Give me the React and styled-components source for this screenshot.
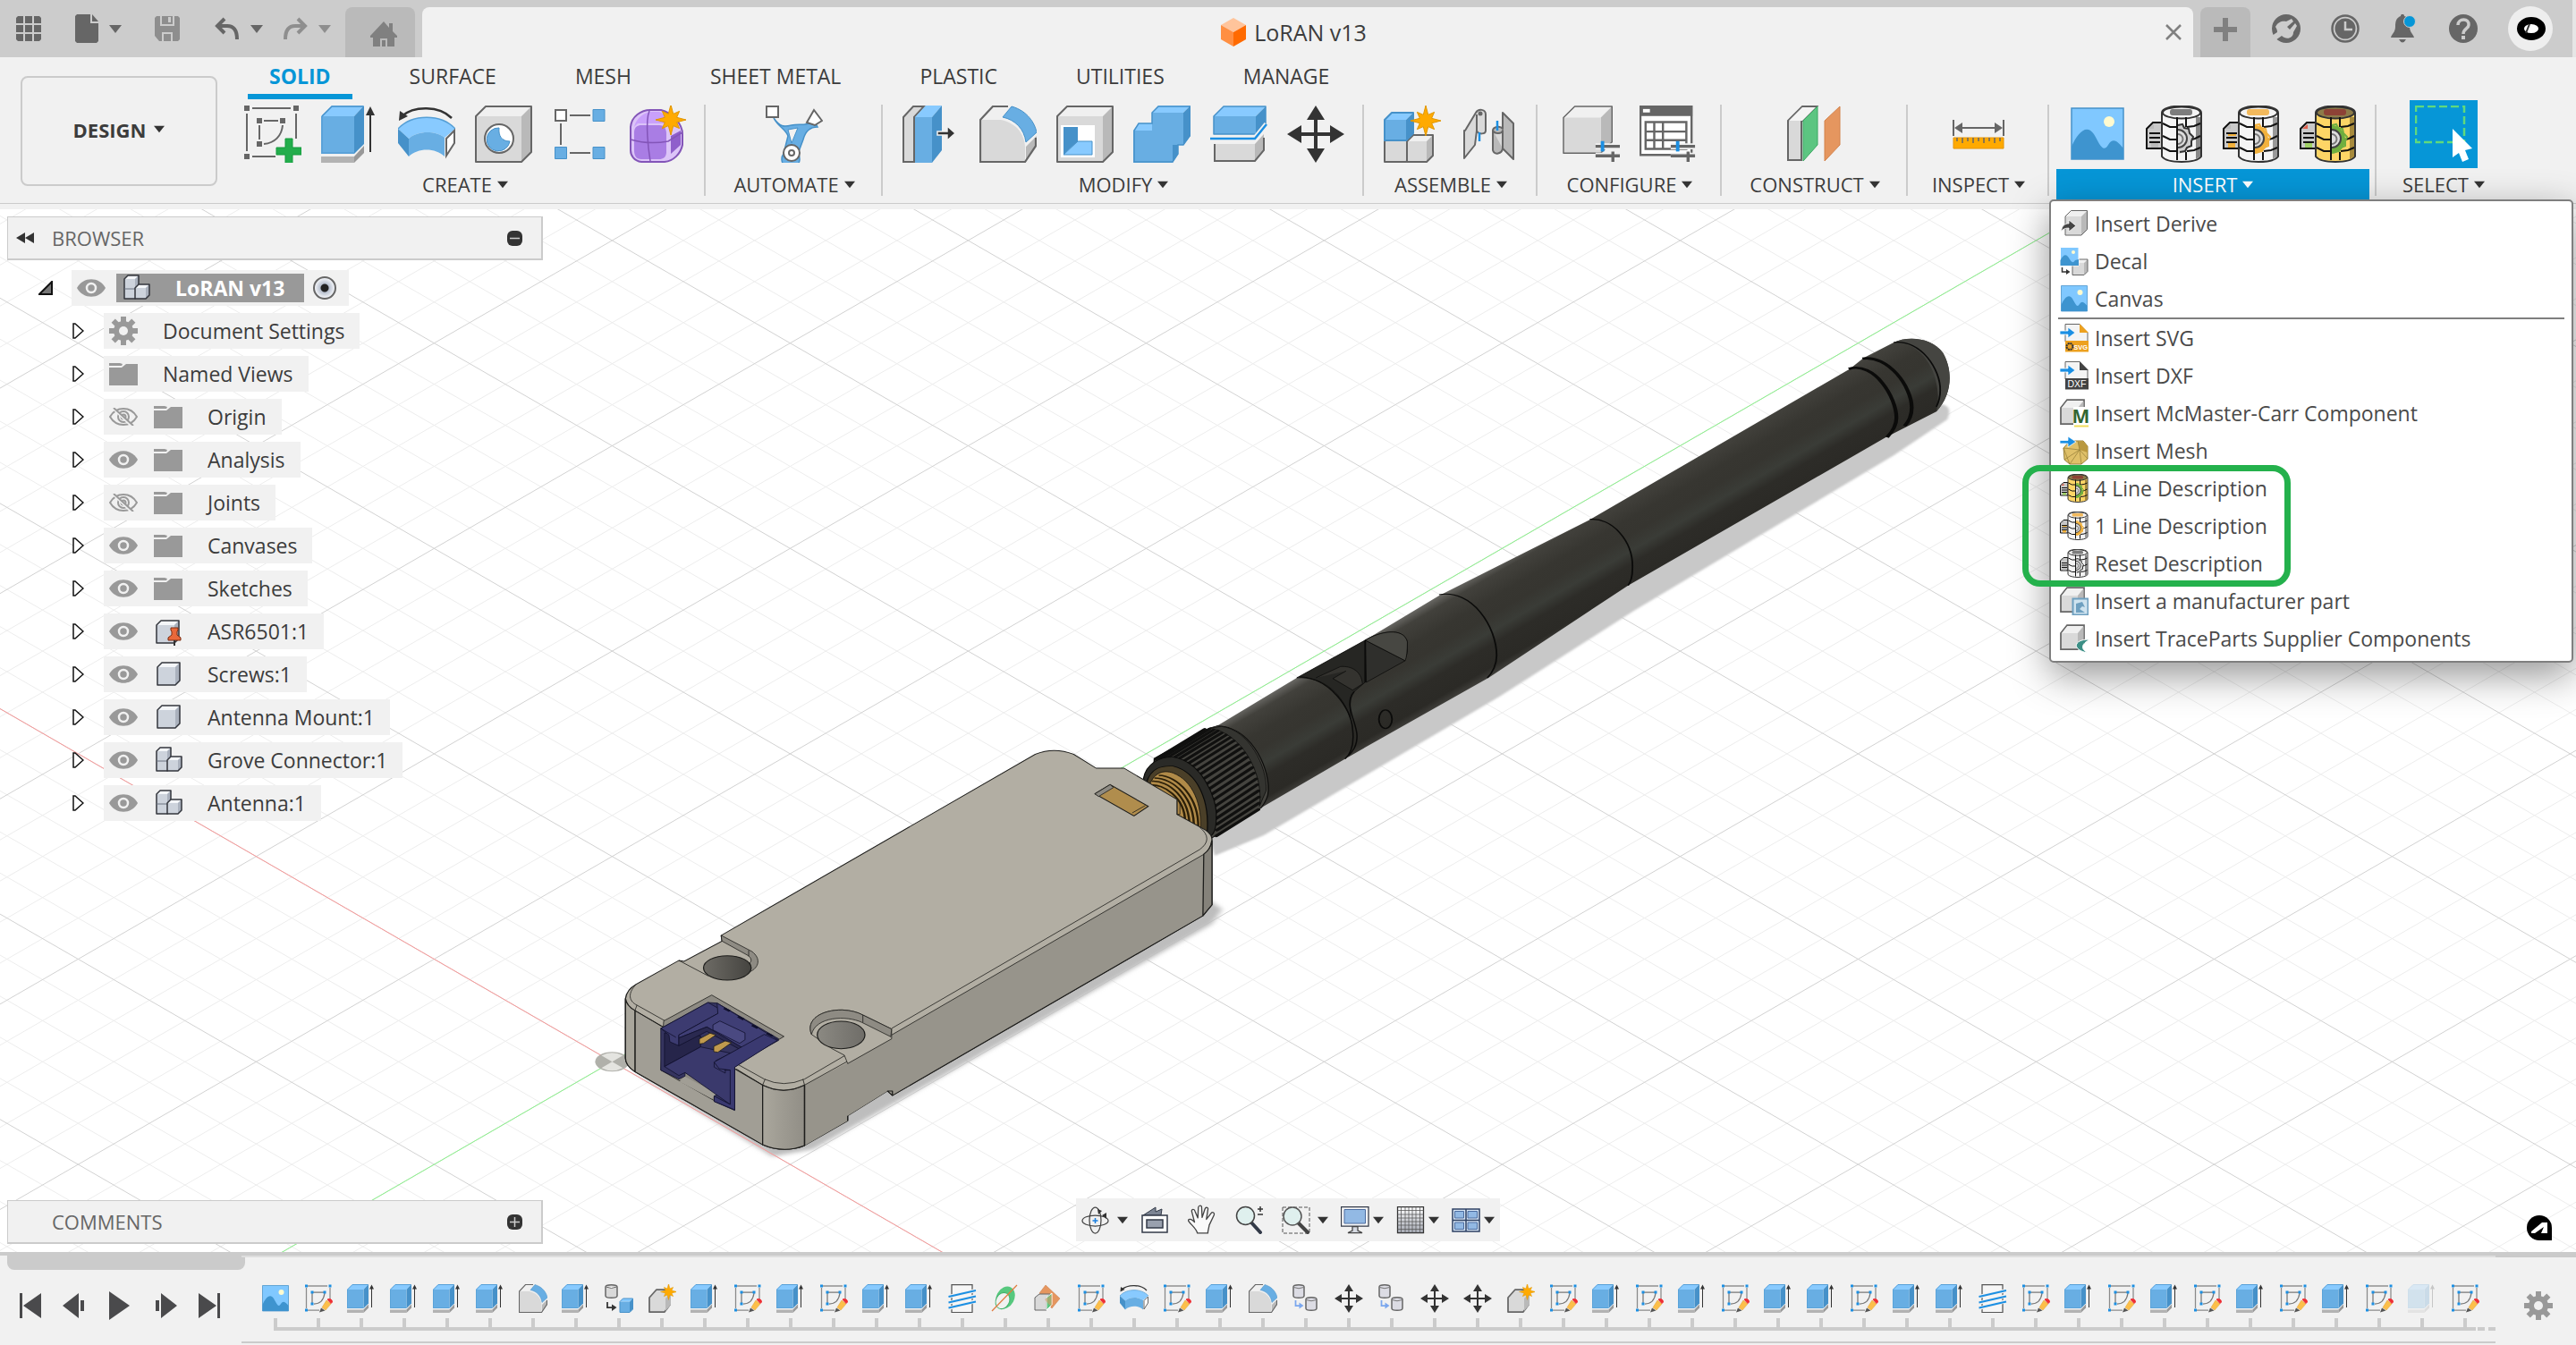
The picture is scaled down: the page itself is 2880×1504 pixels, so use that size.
import React from 'react';
import styled, { createGlobalStyle, css } from 'styled-components';

const color = {
  chrome: '#cccccc',
  chromeDark: '#bababa',
  panel: '#f1f1f1',
  line: '#cbcbcb',
  text: '#3c3c3c',
  muted: '#666666',
  accent: '#0696d7',
  blue: '#68aee3',
  blueLight: '#88caff',
  blueDark: '#4691c9',
  grey: '#d9d9d9',
  greyLight: '#f0f0f0',
  greyDark: '#b9b9b9',
  edge: '#666666',
};

const GlobalStyle = createGlobalStyle`
  *, *::before, *::after { box-sizing: border-box; }
  body {
    margin: 0;
    background: ${color.panel};
    color: ${color.text};
    font-family: 'Open Sans', 'Noto Sans', sans-serif;
    font-size: 22px;
    line-height: 30px;
  }
  button {
    margin: 0;
    padding: 0;
    border: 0;
    background: none;
    color: inherit;
    font: inherit;
    cursor: pointer;
  }
  svg { display: block; flex: none; }
`;

/* ---------- icon drawing helpers ---------- */

const Svg = ({ size = 64, h, box = '0 0 64 64', children, ...rest }) => (
  <svg width={size} height={h || size} viewBox={box} fill="none" aria-hidden="true" {...rest}>
    {children}
  </svg>
);

const Caret = ({ fill = '#333', w = 14, h = 9 }) => (
  <svg width={w} height={h} viewBox="0 0 14 9" aria-hidden="true">
    <path d="M0 0H14L7 9Z" fill={fill} />
  </svg>
);

const Star = ({ cx, cy, r, inner = 0.5 }) => {
  const pts = Array.from({ length: 16 }, (_, i) => {
    const a = (i * Math.PI) / 8 - Math.PI / 2;
    const k = i % 2 ? r * inner : i % 4 ? r * 0.8 : r;
    return `${(cx + k * Math.cos(a)).toFixed(1)},${(cy + k * Math.sin(a)).toFixed(1)}`;
  });
  return <polygon points={pts.join(' ')} fill="#ffaa00" stroke="#e09600" />;
};

const Box = ({ x, y, w, h, d = 11, blue, sw = 2 }) => {
  const [f, t, s, e] = blue
    ? [color.blue, color.blueLight, color.blueDark, color.blueDark]
    : [color.grey, color.greyLight, color.greyDark, color.edge];
  return (
    <g strokeLinejoin="round">
      <path d={`M${x} ${y + d}l${d} ${-d}h${w}l${-d} ${d}Z`} fill={t} />
      <path d={`M${x + w} ${y + d}l${d} ${-d}v${h}l${-d} ${d}Z`} fill={s} />
      <path d={`M${x} ${y + d}h${w}v${h}h${-w}Z`} fill={f} />
      <path
        d={`M${x} ${y + d}l${d} ${-d}h${w}v${h}l${-d} ${d}h${-w}Z`}
        stroke={e}
        strokeWidth={sw}
      />
    </g>
  );
};

const IconSketch = () => (
  <Svg>
    <g fill={color.edge}>
      <path d="M0 0h6v6H0zM55 0h6v6h-6zM0 54h6v6H0zM14 14h6v6h-6zM40 14h6v6h-6zM14 40h6v6h-6z" />
    </g>
    <path d="M9 3h43M3 9v42M58 9v28M9 57h26M22 17h16M17 22v16M43 22C42 34 34 42 22 43" stroke={color.edge} strokeWidth="2" />
    <path d="M46 37h8v10h10v8H54v10h-8V55H36v-8h10z" fill="#23ad4c" stroke="#159a3c" />
  </Svg>
);

const IconExtrude = ({ size, ...p }) => (
  <Svg size={size} {...p}>
    <path d="M0 12L12 0H48L37 12Z" fill={color.blueLight} />
    <path d="M37 12L48 0V43L37 54Z" fill={color.blueDark} />
    <path d="M0 12H37V54H0Z" fill={color.blue} />
    <path d="M1 12L12 1H47" stroke={color.blueDark} strokeWidth="1.5" />
    <path d="M1 12V53H37" stroke="#559fd6" strokeWidth="1.5" />
    <path d="M0 57H37V64H0Z" fill="#b3b3b3" />
    <path d="M37 57L48 45V53L37 64Z" fill="#999" />
    <path d="M55 8V52" stroke="#333" strokeWidth="2" />
    <path d="M55 1L60 11H50Z" fill="#333" />
  </Svg>
);

const IconRevolve = ({ size }) => (
  <Svg size={size}>
    <path d="M0 26C16 9 48 9 64 26L52 36C42 28 22 28 12 37Z" fill={color.blueLight} />
    <path d="M12 37C22 28 42 28 52 36V57C42 47 22 47 12 57Z" fill={color.blue} />
    <path d="M0 26L12 37V57L0 42Z" fill={color.blueDark} />
    <path d="M0 26C16 9 48 9 64 26" stroke="#559fd6" strokeWidth="1.5" />
    <path d="M54 37L63 28V42L54 56Z" fill="#fff" stroke={color.edge} strokeWidth="2" />
    <path d="M4 12C18 0 46 0 60 14" stroke="#333" strokeWidth="2.5" />
    <path d="M1 17L2 6L11 12Z" fill="#333" />
  </Svg>
);

const IconHole = () => (
  <Svg>
    <Box x={1} y={1} w={51} h={51} />
    <circle cx="27" cy="37" r="16" fill="#fff" stroke={color.edge} strokeWidth="2" />
    <path d="M27 25a13 13 0 1 0 12 15C30 40 26 34 27 25Z" fill={color.blue} stroke={color.blueDark} />
  </Svg>
);

const IconPattern = () => (
  <Svg>
    <rect x="4" y="5" width="12" height="12" fill="#fff" stroke={color.edge} strokeWidth="2" />
    <g fill={color.blue} stroke={color.blueDark}>
      <path d="M46 4.500h13v13H46zM3.500 46.500h13v13h-13zM46 46.500h13v13H46z" />
    </g>
    <path d="M20 11h23M10 20v24M20 53h23" stroke={color.edge} strokeWidth="2" />
  </Svg>
);

const IconForm = () => (
  <Svg>
    <path d="M2 24C3 12 14 5 24 5H36C48 8 60 20 60 32V44C58 54 50 62 40 63H14C6 62 2 56 2 50Z" fill="#dcc4f8" stroke="#8355b8" strokeWidth="2" />
    <path d="M6 24C8 14 18 7 26 7H34C40 9 44 16 42 20H10Z" fill="#c9a0fb" />
    <path d="M6 30C6 24 10 22 14 22H34C40 22 42 26 42 32V52C42 58 38 60 34 60H14C8 60 6 56 6 50Z" fill="#a97de4" />
    <path d="M47 34L58 28V44L47 54Z" fill="#8f5fcb" />
    <path d="M2 38Q22 44 44 40L60 30M23 6C18 18 22 50 24 62" stroke="#8355b8" strokeWidth="1.500" />
    <Star cx={47} cy={16} r={17} inner={0.42} />
  </Svg>
);

const IconAutomate = () => (
  <Svg>
    <path d="M9 14C16 24 20 24 29 22C38 20 46 24 54 16L58 24C48 24 44 30 42 38L36 54A10 10 0 1 1 20 54L25 34C22 26 14 24 9 14Z" fill={color.blue} stroke={color.blueDark} strokeWidth="1.500" />
    <path d="M25 27L36 25L29 42Z" fill="#f1f1f1" stroke={color.blueDark} />
    <rect x="1" y="1" width="13" height="12" fill="#fff" stroke={color.edge} strokeWidth="2" />
    <path d="M54 5L63 17L55 22L46 19Z" fill="#fff" stroke={color.edge} strokeWidth="2" />
    <circle cx="29" cy="53" r="9" fill="#fff" stroke={color.edge} strokeWidth="2" />
    <circle cx="29" cy="53" r="3" stroke={color.edge} strokeWidth="2" />
  </Svg>
);

const IconPressPull = () => (
  <Svg>
    <path d="M1 13L12 1H24L13 13V63H1Z" fill={color.grey} stroke={color.edge} strokeWidth="2" />
    <path d="M14 13L26 0H44L33 13Z" fill={color.blueLight} />
    <path d="M33 13L44 0V50L33 64Z" fill={color.blueDark} />
    <path d="M14 13H33V64H14Z" fill={color.blue} />
    <path d="M39 29h11v-6l9 8-9 8v-6H39z" fill="#333" stroke="#f1f1f1" strokeWidth="1.500" />
  </Svg>
);

const IconFillet = ({ size }) => (
  <Svg size={size}>
    <path d="M1 16L15 1H36L26 16Z" fill={color.greyLight} />
    <path d="M1 16H24C42 20 50 32 51 46V63H1Z" fill={color.grey} />
    <path d="M52 46L64 34V46L52 63Z" fill={color.greyDark} />
    <path d="M26 13L36 1C54 6 62 20 64 30L52 41C50 26 40 16 26 13Z" fill={color.blue} stroke={color.blueDark} />
    <path d="M32 1H15L1 16V63H51L63 45V36" stroke={color.edge} strokeWidth="2.200" />
  </Svg>
);

const IconShell = () => (
  <Svg>
    <Box x={1} y={1} w={51} h={51} />
    <path d="M5 22H43V58H5Z" fill="#fff" />
    <path d="M8 24H24V40L8 55Z" fill={color.blueDark} />
    <path d="M8 55L24 40H40V55Z" fill={color.blueLight} stroke={color.blueDark} />
  </Svg>
);

const IconCombine = () => (
  <Svg>
    <path d="M21 8L28 0H64L56 8ZM0 28L6 20H22V28Z" fill={color.blueLight} />
    <path d="M56 8L64 0V34L56 44ZM44 44H50V54L44 64Z" fill={color.blueDark} />
    <path d="M0 28H21V8H56V44H44V64H0Z" fill={color.blue} />
    <path d="M1 28L6 20H21V8L28 1H63V34L56 44H50V54L44 63H1Z" stroke={color.blueDark} strokeWidth="1.500" />
  </Svg>
);

const IconSplit = () => (
  <Svg>
    <Box x={4} y={1} w={47} h={20} blue sw={1.5} />
    <path d="M5 43H50V62H5Z" fill={color.grey} />
    <path d="M50 43L60 32V50L50 62Z" fill={color.greyDark} />
    <path d="M5 43V62H50L60 50V36" stroke={color.edge} strokeWidth="2" />
    <path d="M0 37H50L63 21" stroke="#f1f1f1" strokeWidth="6" />
    <path d="M0 37H50L63 21" stroke="#1b8fe3" strokeWidth="2.500" />
  </Svg>
);

const IconMove = ({ size }) => (
  <Svg size={size}>
    <path d="M32 0L42 16H34V30H48V22L64 32L48 42V34H34V48H42L32 64L22 48H30V34H16V42L0 32L16 22V30H30V16H22Z" fill="#333" />
  </Svg>
);

const IconNewComponent = () => (
  <Svg>
    <Box x={1} y={33} w={24} h={23} d={7} />
    <Box x={26} y={33} w={22} h={23} d={7} />
    <Box x={1} y={8} w={24} h={23} d={8} blue />
    <Star cx={47} cy={17} r={17} inner={0.42} />
  </Svg>
);

const IconJoint = () => (
  <Svg>
    <g stroke={color.edge} strokeWidth="2" strokeLinejoin="round">
      <path d="M5 28L17 8C20 3 28 4 28 10V28C28 32 20 33 18 28L16 44L4 59V28Z" fill={color.grey} />
      <path d="M18 10V28" />
      <path d="M59 20L47 8V26C44 22 36 24 36 28V50C38 56 46 54 47 48L59 60Z" fill={color.greyDark} />
      <path d="M36 28C38 32 46 32 47 28V48" fill={color.grey} />
    </g>
    <circle cx="22" cy="9" r="2.500" fill={color.edge} />
    <path d="M21 30V40M41 17V28" stroke="#1b8fe3" strokeWidth="2.500" />
  </Svg>
);

const Sliders = ({ x }) => (
  <g>
    <path d={`M${x} 47h28M${x} 58h28`} stroke="#f1f1f1" strokeWidth="7" />
    <path d={`M${x} 47h28M${x} 58h28M${x + 20} 53v12`} stroke={color.edge} strokeWidth="3.500" />
    <path d={`M${x + 8} 41v12`} stroke="#1b8fe3" strokeWidth="4" />
  </g>
);

const IconConfigure = () => (
  <Svg box="0 0 66 66">
    <Box x={1} y={1} w={43} h={41} d={13} sw={1.5} />
    <Sliders x={38} />
  </Svg>
);

const IconConfigTable = () => (
  <Svg box="0 0 66 66">
    <path d="M1 1H60V57H1Z" fill="#fff" stroke={color.edge} strokeWidth="2.500" />
    <path d="M0 0H61V12H0Z" fill={color.edge} />
    <path d="M4 4h8v4H4z" fill="#fff" />
    <path d="M7 19H54V50H7ZM7 30H54M7 40H54M17 19V50M27 19V50" stroke={color.edge} strokeWidth="2.500" />
    <Sliders x={36} />
  </Svg>
);

const IconConstruct = () => (
  <Svg>
    <path d="M2 17L18 1H34L17 18V61H2Z" fill={color.grey} stroke={color.edge} strokeWidth="2" />
    <path d="M3 17L18 2H33L18 17Z" fill="#f4f4f4" />
    <path d="M19 17L35 1V44L19 62Z" fill="#5cc581" stroke="#3aa862" />
    <path d="M43 17L60 1V44L43 62Z" fill="#e5965f" stroke="#d3824b" />
  </Svg>
);

const IconMeasure = () => (
  <Svg>
    <path d="M4 16V34M60 16V34M8 25H56" stroke={color.edge} strokeWidth="2" />
    <path d="M5 25L14 19V31ZM59 25L50 19V31Z" fill={color.edge} />
    <path d="M4 36H60V48H4Z" fill="#ffaa00" stroke="#e59400" />
    <path d="M8 36v4M14 36v6M20 36v4M26 36v6M32 36v4M38 36v6M44 36v4M50 36v6M56 36v4" stroke={color.edge} strokeWidth="1.500" />
  </Svg>
);

const IconCanvas = ({ size }) => (
  <Svg size={size}>
    <path d="M3 3H61V60H3Z" fill="#80c8ff" stroke={color.blueDark} strokeWidth="1.500" />
    <circle cx="45" cy="18" r="6" fill="#fffbd0" />
    <path d="M3 46C10 30 20 20 28 32C34 42 38 54 44 44C50 34 56 42 61 48V60H3Z" fill="#3e94cf" />
  </Svg>
);

const barrel = {
  grey: { body: '#f4f4f4', shade: '#888', cap: '#7d7d7d', rim: '#f4f4f4', gear: '#cfcfcf', a: '#bbb', b: '#bbb' },
  amber: { body: '#f4f4f4', shade: '#999', cap: '#f2b95c', rim: '#f4f4f4', gear: '#f2b13c', a: '#bbb', b: '#f2b13c' },
  gold: { body: '#fdd566', shade: '#a78a3c', cap: '#8d4236', rim: '#8d7b49', gear: '#6fae3f', a: '#e0604c', b: '#9fd065' },
};

const IconBarrel = ({ size, variant }) => {
  const c = barrel[variant];
  return (
    <Svg size={size}>
      <path d="M1 26L8 19H18V48H1Z" fill="#c9c9c9" stroke="#111" strokeWidth="2" />
      <path d="M3 26h6v-5z" fill={c.a} />
      <path d="M4 31h12M4 36h12M4 41h12" stroke="#111" strokeWidth="2" />
      <path d="M6 42h8v5H6z" fill={c.b} />
      <path d="M6 32h9v2H6z" fill={variant === 'amber' ? c.b : 'none'} />
      <path d="M18 8C18 -2 62 -2 62 8V57C56 65 24 65 18 57Z" fill={c.body} stroke="#333" strokeWidth="2" />
      <path d="M56 13H61V57L56 60Z" fill={c.shade} />
      <ellipse cx="40" cy="8" rx="21" ry="6.500" fill={c.rim} stroke="#333" strokeWidth="2" />
      <rect x="27" y="4" width="25" height="7" rx="3" fill={c.cap} />
      <path d="M35 22A16 16 0 0 1 35 54Z" fill={c.gear} />
      <path d="M36 27A10 10 0 0 1 36 47" fill="#ddd" stroke="#444" strokeWidth="2" />
      <path d="M36 32A5 5 0 0 1 36 43" stroke="#777" strokeWidth="2" />
      <path
        d="M35 13V61M45 13V24M45 52V61M19 20L27 24H35M19 34L27 38H35M19 47L27 51H35M46 24L54 23L61 20M51 38L55 37L61 34M46 51L54 50L61 47"
        stroke="#111"
        strokeWidth="2"
      />
      <path d="M36 22l5-1 2 4 5 1 1 5 4 4-2 5 0 5-5 2-2 4-6 1" stroke={variant === 'grey' ? '#333' : c.gear} strokeWidth="2" />
    </Svg>
  );
};

const IconSelect = () => (
  <Svg>
    <path d="M1 1H55V41H1Z" stroke="#60d97c" strokeWidth="2.500" strokeDasharray="9 4" />
    <path d="M42 26L64 48L56 50L60 60L53 63L49 53L42 58Z" fill="#fff" />
  </Svg>
);

/* timeline-only icons */

const IconTimelineSketch = ({ size }) => (
  <Svg size={size}>
    <path d="M6 4H52" stroke="#a9a9a9" strokeWidth="4" />
    <path d="M5 8V54M58 8V32M6 58H34" stroke="#8a8a8a" strokeWidth="2.500" />
    <path d="M20 18H44M18 20V42M46 20C44 34 36 44 22 44" stroke="#777" strokeWidth="2.500" />
    <path d="M2 1h6v6H2zM55 1h6v6h-6zM2 55h6v6H2zM15 15h6v6h-6zM43 15h6v6h-6zM15 41h6v6h-6z" fill="#1b8fe3" />
    <path d="M40 52L50 36L60 44L48 58Z" fill="#fcbf4a" stroke="#e0a030" />
    <path d="M52 34Q62 30 63 40L60 43Z" fill="#ee2f35" stroke="#ee2f35" strokeWidth="2" />
    <path d="M34 63L38 53L47 59Z" fill="#555" />
  </Svg>
);

const IconComponentFromBody = ({ size }) => (
  <Svg size={size}>
    <path d="M2 6C2 0 28 0 28 6V26C28 32 2 32 2 26Z" fill={color.grey} stroke={color.edge} strokeWidth="3" />
    <path d="M3 6Q15 12 27 6" fill="#fff" stroke={color.edge} strokeWidth="2" />
    <path d="M6 40V52H20" stroke="#333" strokeWidth="3.500" />
    <path d="M16 45L27 52L16 60Z" fill="#333" />
    <Box x={34} y={32} w={22} h={24} d={7} blue />
  </Svg>
);

const IconStarBody = ({ size }) => (
  <Svg size={size}>
    <path d="M4 30L20 12H50V46L38 62H4Z" fill={color.grey} stroke={color.edge} strokeWidth="3.500" strokeLinejoin="round" />
    <path d="M40 32L52 20V46L40 60Z" fill={color.greyDark} />
    <Star cx={47} cy={17} r={18} inner={0.42} />
  </Svg>
);

const IconThread = ({ size }) => (
  <Svg size={size}>
    <path d="M8 1H54V63H8Z" fill="#f6f6f6" stroke="#555" strokeWidth="2.500" />
    <path d="M0 28L62 14M0 42L62 26M0 54L62 38" stroke="#f1f1f1" strokeWidth="8" />
    <path d="M1 28L62 14M1 41L62 27M1 53L62 39" stroke="#1b8fe3" strokeWidth="4" />
  </Svg>
);

const IconAxis = ({ size }) => (
  <Svg size={size}>
    <ellipse cx="32" cy="30" rx="20" ry="26" fill="#57c87e" transform="rotate(28 32 30)" />
    <ellipse cx="26" cy="37" rx="15" ry="19" fill="#f1f1f1" stroke="#43b36b" strokeWidth="2" transform="rotate(28 26 37)" />
    <path d="M2 60L58 2" stroke="#e07c40" strokeWidth="2.500" />
  </Svg>
);

const IconPlane = ({ size }) => (
  <Svg size={size}>
    <path d="M26 2L58 32L40 54L26 36L12 20Z" fill="#e5965f" stroke="#c97842" />
    <path d="M2 30L12 22H36L28 30V58H2Z" fill={color.grey} stroke={color.edge} strokeWidth="2" />
    <path d="M28 30L40 20V46L28 58Z" fill="#5cc581" stroke="#fff" strokeWidth="2" />
    <path d="M24 34L40 24V50L32 44Z" fill="#e5965f" opacity="0.5" />
  </Svg>
);

const IconCopy = ({ size }) => (
  <Svg size={size}>
    <g fill="#dcdce4" stroke="#666" strokeWidth="3">
      <path d="M4 6C4 0 28 0 28 6V26C28 32 4 32 4 26Z" />
      <path d="M32 34C32 28 56 28 56 34V54C56 60 32 60 32 54Z" />
    </g>
    <path d="M5 7Q16 12 27 7M33 35Q44 40 55 35" stroke="#777" strokeWidth="2" />
    <path d="M9 36V48H18" stroke="#7ba7ee" strokeWidth="3.500" />
    <path d="M17 41L27 48L17 55Z" fill="#7ba7ee" />
  </Svg>
);

const timelineIcons = {
  c: IconCanvas,
  s: IconTimelineSketch,
  e: IconExtrude,
  f: IconFillet,
  b: IconComponentFromBody,
  n: IconStarBody,
  t: IconThread,
  a: IconAxis,
  p: IconPlane,
  r: IconRevolve,
  k: IconCopy,
  m: IconMove,
};
const timelineNames = {
  c: 'Canvas', s: 'Sketch', e: 'Extrude', f: 'Fillet', b: 'Component from body', n: 'New component',
  t: 'Thread', a: 'Axis', p: 'Plane', r: 'Revolve', k: 'Copy', m: 'Move',
};
const timelineSteps = 'cseeeefebneseseetapsrsefkmkmmnseseseeseetsesesesesEs';

/* ---------- top bar ---------- */

const Page = styled.div`
  display: grid;
  grid-template-rows: auto auto 1fr auto;
  min-height: 100vh;
`;

const TopBar = styled.header`
  display: flex;
  align-items: flex-end;
  height: 64px;
  padding-left: 16px;
  background: ${color.chrome};
  border-right: 4px solid #e6e6e6;
`;

const QuickActions = styled.div`
  display: flex;
  align-items: center;
  align-self: stretch;
  width: 370px;
`;

const QuickButton = styled.button`
  display: flex;
  align-items: center;
  gap: 12px;
  margin-right: ${(p) => p.$gap || 0}px;
  opacity: ${(p) => (p.disabled ? 0.6 : 1)};
`;

const HomeTab = styled.button`
  display: flex;
  align-items: center;
  justify-content: center;
  width: 78px;
  height: 56px;
  padding: 4px 0 0 8px;
  margin-right: 8px;
  border-radius: 8px 8px 0 0;
  background: ${color.chromeDark};
`;

const DocumentTab = styled.div`
  display: flex;
  flex: 1;
  align-items: center;
  height: 56px;
  padding-right: 12px;
  border-radius: 8px 8px 0 0;
  background: ${color.panel};
`;

const DocumentTitle = styled.h1`
  display: flex;
  flex: 1;
  align-items: center;
  justify-content: center;
  gap: 8px;
  margin: 0;
  font-size: 25px;
  font-weight: 400;
  line-height: 32px;
`;

const NewTab = styled(HomeTab)`
  width: 56px;
  padding: 0 0 6px;
  margin: 0 0 0 8px;
`;

const AccountActions = styled.div`
  display: flex;
  align-items: center;
  align-self: stretch;
  gap: 34px;
  padding: 0 22px 0 24px;
`;

/* ---------- ribbon ---------- */

const Ribbon = styled.div`
  display: flex;
  height: 170px;
  border-bottom: 6px solid ${color.panel};
  box-shadow: inset 0 -1px 0 ${color.line};
`;

const WorkspaceButton = styled.button`
  display: flex;
  align-items: center;
  justify-content: center;
  gap: 9px;
  width: 220px;
  height: 123px;
  padding-bottom: 4px;
  margin: 21px 8px 0 23px;
  border: 2px solid ${color.line};
  border-radius: 8px;
  font-weight: 700;
`;

const RibbonBody = styled.div`
  flex: 1;
  min-width: 0;
`;

const TabList = styled.div`
  display: flex;
  gap: 40px;
  padding-left: 26px;
`;

const RibbonTab = styled.button`
  height: 47px;
  padding: 0 24px;
  border-bottom: 6px solid transparent;
  font-size: 23px;
  white-space: nowrap;
  ${(p) =>
    p['aria-selected'] &&
    css`
      color: ${color.accent};
      border-color: ${color.accent};
      font-weight: 700;
    `}
`;

const Groups = styled.div`
  display: flex;
`;

const Group = styled.section`
  position: relative;
  display: flex;
  flex-direction: column;
  align-items: center;
  min-width: ${(p) => p.$min || 0}px;
  padding: 0 8px;

  &:not(:last-child)::after {
    content: '';
    position: absolute;
    top: 6px;
    right: 0;
    width: 2px;
    height: 102px;
    background: ${color.line};
  }
`;

const GroupTools = styled.div`
  display: flex;
  align-items: center;
  gap: 22px;
  height: 78px;
  padding: 0 14px;
`;

const GroupLabel = styled.button`
  display: flex;
  align-items: center;
  justify-content: center;
  gap: 6px;
  height: 34px;
  width: 100%;
  white-space: nowrap;
  ${(p) =>
    p['aria-expanded'] &&
    css`
      color: #fff;
      background: ${color.accent};
    `}
`;

const SelectTile = styled.button`
  padding: 6px;
  background: ${color.accent};
`;

/* ---------- insert menu ---------- */

const Menu = styled.div`
  position: absolute;
  z-index: 3;
  top: 112px;
  left: 0;
  width: 586px;
  padding: 4px 8px;
  border: 2px solid #7f7f7f;
  border-radius: 5px;
  background: #fff;
  box-shadow: 0 14px 44px rgba(0, 0, 0, 0.42);
`;

const MenuItem = styled.button`
  display: flex;
  align-items: center;
  gap: 7px;
  width: 100%;
  height: 42px;
  padding-left: 2px;
  color: #4a4a4a;
  font-size: 23px;
  text-align: left;
`;

const MenuRule = styled.hr`
  height: 2px;
  margin: 0;
  border: 0;
  background: #7f7f7f;
`;

const MarkedItems = styled.div`
  position: relative;

  &::after {
    content: '';
    position: absolute;
    inset: -5px auto -5px -40px;
    width: 300px;
    border: 7px solid #24b14c;
    border-radius: 20px;
    pointer-events: none;
  }
`;

/* ---------- viewport ---------- */

const Viewport = styled.main`
  position: relative;
  display: flex;
  flex-direction: column;
  justify-content: space-between;
  padding: 8px 24px 9px 8px;
  background: #fff;
`;

const SceneLayer = styled.svg`
  position: absolute;
  inset: 0;
  width: 100%;
  height: 100%;
`;

const Panel = styled.section`
  position: relative;
  width: 599px;
`;

const PanelHeader = styled.header`
  display: flex;
  align-items: center;
  height: 49px;
  padding: 0 21px 0 9px;
  border: 1px solid ${color.line};
  border-width: 1px 2px 2px 1px;
  background: ${color.panel};
  color: ${color.muted};
`;

const PanelTitle = styled.h2`
  flex: 1;
  margin: 0;
  padding-left: ${(p) => (p.$alone ? 40 : 20)}px;
  font-size: 22px;
  font-weight: 400;
`;

const Tree = styled.ul`
  display: flex;
  flex-direction: column;
  align-items: flex-start;
  gap: 8px;
  margin: 0;
  padding: 11px 0 0;
  list-style: none;
  font-size: 23px;
`;

const TreeLine = styled.li`
  display: flex;
  align-items: center;
  padding-left: ${(p) => (p.$root ? 32 : 68)}px;
`;

const Expander = styled.button`
  display: flex;
  justify-content: center;
  width: 22px;
  margin-right: 18px;
`;

const TreeRow = styled.div`
  display: flex;
  align-items: center;
  gap: 18px;
  height: 40px;
  padding: 0 17px 0 6px;
  background: ${color.panel};
  white-space: nowrap;
`;

const TreeLabel = styled.span`
  padding-left: 10px;
`;

const ActiveComponent = styled.div`
  display: flex;
  align-items: center;
  gap: 18px;
  height: 32px;
  margin: 0 -8px 0 -6px;
  padding: 0 22px 0 6px;
  background: #999;
  color: #fff;
  font-weight: 700;
`;

const ActivateRadio = styled.input`
  appearance: none;
  width: 26px;
  height: 26px;
  margin: 0 -3px 0 0;
  border: 2px solid #666;
  border-radius: 50%;
  background: radial-gradient(circle, #222 0 4px, #b8c0cf 5px, #f2f4f8 11px);
`;

const ViewportFooter = styled.footer`
  position: relative;
  display: grid;
  grid-template-columns: 1fr auto 1fr;
  align-items: end;
`;

const NavBar = styled.div`
  display: flex;
  align-items: center;
  gap: 14px;
  height: 48px;
  margin: 0 -16px 3px 0;
  padding: 0 6px;
  background: ${color.panel};
`;

const NavButton = styled.button`
  display: flex;
  align-items: center;
  gap: ${(p) => p.$gap || 0}px;
  margin-right: ${(p) => (p.$gap ? 0 : 6)}px;
`;

const AssistantButton = styled.button`
  justify-self: end;
  margin: 0 3px 4px 0;
`;

/* ---------- timeline ---------- */

const Timeline = styled.footer`
  display: grid;
  grid-template-columns: 270px 1fr 90px;
  height: 104px;
  border-top: 4px solid ${color.line};
  background: ${color.panel};
`;

const Playback = styled.div`
  padding-left: 8px;
`;

const ScrollThumb = styled.div`
  width: 266px;
  height: 16px;
  border-radius: 0 0 8px 8px;
  background: ${color.line};
`;

const PlaybackButtons = styled.div`
  display: flex;
  gap: 18px;
  padding: 18px 0 0 10px;
`;

const PlaybackButton = styled.button`
  display: flex;
  align-items: center;
  justify-content: center;
  width: 32px;
  height: 44px;
`;

const Track = styled.ol`
  display: flex;
  margin: 0 0 2px;
  padding: 30px 0 0 14px;
  border-top: 2px solid #dedede;
  border-bottom: 2px solid ${color.line};
  list-style: none;

  &::after {
    content: '';
    width: 20px;
    height: 4px;
    margin: 48px 0 0 -10px;
    background: repeating-linear-gradient(90deg, ${color.line} 0 8px, transparent 8px 12px);
  }
`;

const Step = styled.li`
  display: flex;
  flex-direction: column;
  align-items: center;
  width: 48px;
  height: 52px;
  background: linear-gradient(${color.line}, ${color.line}) right bottom / 100% 4px no-repeat;
  padding-bottom: 4px;

  &::after {
    content: '';
    width: 4px;
    height: 10px;
    margin-top: auto;
    background: ${color.line};
  }

  &:first-child {
    background-size: 26px 4px;
  }

  &:last-child {
    background-position: left bottom;
    background-size: 36px 4px;
  }

  button {
    opacity: ${(p) => (p.$suppressed ? 0.22 : 1)};
  }
`;

const TimelineSettings = styled.button`
  display: flex;
  align-items: center;
  justify-content: center;
  border-top: 2px solid ${color.line};
  padding: 10px 0 0 6px;
`;

/* ---------- small icons ---------- */

const Gear = ({ size = 32, fill = '#999' }) => (
  <Svg size={size} box="0 0 32 32">
    <g fill={fill}>
      {[0, 45, 90, 135].map((a) => (
        <rect key={a} x="13" y="0" width="6" height="32" transform={`rotate(${a} 16 16)`} />
      ))}
      <circle cx="16" cy="16" r="11" />
    </g>
    <circle cx="16" cy="16" r="5" fill={color.panel} />
  </Svg>
);

const Eye = ({ off }) => (
  <Svg size={32} h={20} box="0 0 32 20">
    {off ? (
      <g stroke="#999" strokeWidth="2">
        <path d="M1 10C8 -2 24 -2 31 10C24 22 8 22 1 10Z" />
        <circle cx="16" cy="10" r="6" />
        <circle cx="16" cy="10" r="2.500" />
        <path d="M4 0L26 21" stroke={color.panel} strokeWidth="3" />
        <path d="M5 0L27 20" />
      </g>
    ) : (
      <>
        <path d="M0 10C7 -3 25 -3 32 10C25 23 7 23 0 10Z" fill="#999" />
        <circle cx="16" cy="10" r="5" stroke={color.panel} strokeWidth="2.500" />
      </>
    )}
  </Svg>
);

const Folder = () => (
  <Svg size={32} h={26} box="0 0 32 26">
    <path d="M0 1H12L15 2L14 4H0ZM0 6H14L19 2H32V26H0Z" fill="#999" />
  </Svg>
);

const steel = { f: '#cdd3dc', t: '#f4f6f9', s: '#aab1bd', e: '#33363d' };
const SteelBox = ({ x, y, w, h, d = 5 }) => (
  <g strokeLinejoin="round">
    <path d={`M${x} ${y + d}l${d} ${-d}h${w}v${h}l${-d} ${d}h${-w}Z`} fill={steel.f} />
    <path d={`M${x} ${y + d}l${d} ${-d}h${w}l${-d} ${d}Z`} fill={steel.t} />
    <path d={`M${x + w} ${y + d}l${d} ${-d}v${h}l${-d} ${d}Z`} fill={steel.s} />
    <path d={`M${x} ${y + d}l${d} ${-d}h${w}v${h}l${-d} ${d}h${-w}Z`} stroke={steel.e} strokeWidth="1.500" />
  </g>
);

const treeIcons = {
  gear: <Gear />,
  folder: <Folder />,
  body: (
    <Svg size={32} box="0 0 32 32">
      <SteelBox x={4} y={3} w={20} h={20} />
    </Svg>
  ),
  pinned: (
    <Svg size={32} box="0 0 32 32">
      <SteelBox x={3} y={4} w={20} h={20} />
      <path d="M19 12h8v3l-1 1v4l4 3v3H16v-3l4-3v-4l-1-1z" fill="#e8683a" stroke="#7a2c12" />
      <path d="M23 26v6" stroke="#333" strokeWidth="2" />
    </Svg>
  ),
  assembly: (
    <Svg size={32} box="0 0 32 32">
      <SteelBox x={3} y={2} w={12} h={22} d={4} />
      <path d="M3 17H15" stroke="#6b7280" />
      <SteelBox x={15} y={12} w={12} h={12} d={4} />
    </Svg>
  ),
};

const Toggle = ({ plus }) => (
  <Svg size={17} box="0 0 17 17">
    <rect width="17" height="17" rx="6" fill="#333" />
    <path d={plus ? 'M3 8.500H14M8.500 3V14' : 'M3 8.500H14'} stroke="#ccc" strokeWidth="1.500" />
  </Svg>
);

const FileIcon = ({ children, corner, label }) => (
  <Svg size={32}>
    <path d="M12 1H44L62 20V40H12Z" fill="#f4f4f4" stroke={color.edge} strokeWidth="2" />
    <path d="M44 0L64 20H44Z" fill={corner} />
    <path d="M12 38H64V63H12Z" fill={corner} />
    <path d="M0 16h18V8l16 12-16 12v-8H0z" fill="#1b8fe3" stroke="#fff" strokeWidth="1.500" />
    {children}
    <text
      x={children ? 62 : 38}
      y="58"
      fontSize={children ? 15 : 21}
      fontWeight={children ? 700 : 400}
      textAnchor={children ? 'end' : 'middle'}
      fill="#fff"
      fontFamily="Liberation Sans, sans-serif"
    >
      {label}
    </text>
  </Svg>
);

const SmallGreyBody = ({ children }) => (
  <Svg size={32}>
    <path d="M2 20L16 2H54V42L40 56H2Z" fill={color.grey} stroke={color.edge} strokeWidth="3.500" />
    <path d="M4 20L17 4H52L40 20Z" fill={color.greyLight} />
    <path d="M40 20L53 5V42L40 55Z" fill={color.greyDark} />
    {children}
  </Svg>
);

const menuIcons = {
  derive: (
    <Svg size={32}>
      <Box x={12} y={3} w={36} h={42} d={13} />
      <path d="M3 50C4 36 12 32 20 32V24L36 37L20 50V42C12 42 6 44 3 50Z" fill="#444" stroke="#fff" strokeWidth="1.500" />
    </Svg>
  ),
  decal: (
    <Svg size={32}>
      <Box x={28} y={28} w={26} h={27} d={8} />
      <path d="M1 1H42V42H1Z" fill="#80c8ff" stroke="#fff" strokeWidth="2" />
      <circle cx="30" cy="12" r="4" fill="#fffbd0" />
      <path d="M1 30Q12 8 22 28Q28 40 34 30L42 28V42H1Z" fill="#3e94cf" />
      <path d="M5 46V56H16" stroke="#333" strokeWidth="3" />
      <path d="M14 50L23 56L14 62Z" fill="#333" />
    </Svg>
  ),
  canvas: <IconCanvas size={32} />,
  svg: (
    <FileIcon corner="#eda11f" label="SVG">
      <circle cx="22" cy="51" r="7" stroke="#333" strokeWidth="4" strokeDasharray="4 1.500" />
    </FileIcon>
  ),
  dxf: <FileIcon corner="#434343" label="DXF" />,
  mcmaster: (
    <SmallGreyBody>
      <path d="M30 18H64V64H30Z" fill="#fff" />
      <text x="47" y="54" fontSize="42" fontWeight="700" textAnchor="middle" fill="#336633" fontFamily="Open Sans, sans-serif">
        M
      </text>
      <path d="M32 61H64" stroke="#f0dc5a" strokeWidth="4" />
    </SmallGreyBody>
  ),
  mesh: (
    <Svg size={32}>
      <path d="M8 26L22 10H52L62 22V50L48 62H22L10 52Z" fill="#dfc069" stroke="#98803a" strokeWidth="2" />
      <path d="M40 12L52 10L62 22V36L44 30Z" fill="#b9983f" />
      <path d="M8 26L44 30L22 62M44 30L62 50M44 30L40 10M10 52L44 30L48 62M8 26L22 62" stroke="#98803a" strokeWidth="1.500" />
      <path d="M0 9h18V0l18 12-18 12v-8H0z" fill="#1b8fe3" stroke="#fff" strokeWidth="1.500" />
    </Svg>
  ),
  four: <IconBarrel size={32} variant="gold" />,
  one: <IconBarrel size={32} variant="amber" />,
  reset: <IconBarrel size={32} variant="grey" />,
  part: (
    <SmallGreyBody>
      <path d="M29 27H63V63H29Z" fill="#cfe3ef" stroke="#6fa0c0" strokeWidth="4" />
      <path d="M36 38L50 34L56 46L50 44L44 50L56 58H36Z" fill="#6fa0c0" />
    </SmallGreyBody>
  ),
  trace: (
    <SmallGreyBody>
      <path d="M64 34C30 34 26 58 62 64C48 56 46 46 64 36Z" fill="#3c8f86" stroke="#fff" strokeWidth="2" />
    </SmallGreyBody>
  ),
};

const navIcons = {
  orbit: (
    <Svg size={32}>
      <ellipse cx="31" cy="33" rx="13" ry="29" stroke="#444" strokeWidth="2.500" />
      <ellipse cx="31" cy="34" rx="29" ry="12" stroke="#444" strokeWidth="2.500" />
      <path d="M31 28v12M25 34h12" stroke="#1b7fe0" strokeWidth="3" />
      <path d="M36 8l10 4-8 8zM46 22l10-6v14z" fill="#333" />
    </Svg>
  ),
  look: (
    <Svg size={32}>
      <path d="M6 22L34 4V14L48 8L46 22Z" fill="#7c8493" stroke="#333a48" strokeWidth="2" />
      <path d="M4 22H60V60H4Z" fill="#fff" stroke="#333a48" strokeWidth="3" />
      <path d="M14 32H50V50H14Z" fill="#99a0ae" stroke="#333a48" strokeWidth="3" />
    </Svg>
  ),
  pan: (
    <Svg size={34}>
      <path
        d="M22 60C20 50 8 42 3 34C3 29 10 30 16 37L10 14C10 9 16 9 17 14L23 28L24 6C25 1 31 1 31 6L32 27L38 9C40 4 46 6 44 11L41 31L51 18C54 14 59 18 57 22L47 43C46 50 44 54 44 60Z"
        fill="#fafafa"
        stroke="#444"
        strokeWidth="2.500"
        strokeLinejoin="round"
      />
    </Svg>
  ),
  zoom: (
    <Svg size={32}>
      <path d="M36 38L56 60" stroke="#333a48" strokeWidth="8" strokeLinecap="round" />
      <circle cx="23" cy="23" r="20" fill="#dff0ee" stroke="#444" strokeWidth="3" />
      <path d="M56 2v12M50 8h12M50 20h12" stroke="#333" strokeWidth="3" />
    </Svg>
  ),
  zoomWindow: (
    <Svg size={32}>
      <path d="M2 4H62V62H2Z" stroke="#555" strokeWidth="2" strokeDasharray="8 4" />
      <path d="M38 40L58 60" stroke="#444" strokeWidth="8" strokeLinecap="round" />
      <circle cx="24" cy="24" r="20" fill="#dff0ee" stroke="#555" strokeWidth="3" />
    </Svg>
  ),
  display: (
    <Svg size={32}>
      <path d="M1 3H62V46H1Z" fill="#f6f6f6" stroke="#333a48" strokeWidth="2.500" />
      <path d="M8 9H55V40H8Z" fill="#92b9e4" stroke="#4c6da0" strokeWidth="2" />
      <path d="M26 47H38V56L48 61H16L26 56Z" fill="#d6dae2" stroke="#444" strokeWidth="2.500" />
    </Svg>
  ),
  grid: (
    <Svg size={32}>
      <defs>
        <linearGradient id="gridFill" x2="0" y2="1">
          <stop stopColor="#fff" />
          <stop offset="1" stopColor="#a4a8b2" />
        </linearGradient>
      </defs>
      <path d="M3 3H61V61H3Z" fill="url(#gridFill)" stroke="#333" strokeWidth="2.500" />
      <path d="M3 11H61M3 20H61M3 28H61M3 36H61M3 44H61M3 53H61M11 3V61M20 3V61M28 3V61M36 3V61M44 3V61M53 3V61" stroke="#555" strokeWidth="1.500" />
    </Svg>
  ),
  layout: (
    <Svg size={32}>
      <path d="M2 8H62V58H2Z" fill="#d7e6f6" stroke="#2f4264" strokeWidth="3" />
      <path d="M7 13H27V28H7ZM36 13H57V28H36ZM7 38H27V53H7ZM36 38H57V53H36Z" fill="#92b9e4" stroke="#4c6da0" strokeWidth="2" />
      <path d="M32 8V58M2 33H62" stroke="#2f4264" strokeWidth="3" />
    </Svg>
  ),
};

/* ---------- 3D scene ---------- */

const AXIS = { x: 684.4, y: 1187.3 };
const MAJOR = { x: 398, y: 229.6 };

const gridPath = (minor) => {
  const parts = [];
  const k = MAJOR.y / MAJOR.x;
  const step = MAJOR.y / 5;
  for (let i = -70; i <= 70; i += 1) {
    if ((i % 5 === 0) === minor) continue;
    const c = AXIS.y + i * step;
    const left = (c + k * AXIS.x).toFixed(1);
    const right = (c + k * AXIS.x - k * 2880).toFixed(1);
    parts.push(`M0 ${left}L2880 ${right}`);
    const l2 = (c - k * AXIS.x).toFixed(1);
    const r2 = (c - k * AXIS.x + k * 2880).toFixed(1);
    parts.push(`M0 ${l2}L2880 ${r2}`);
  }
  return parts.join('');
};

const cubic = (p, t) =>
  [0, 1].map(
    (i) =>
      (1 - t) ** 3 * p[0][i] + 3 * (1 - t) ** 2 * t * p[1][i] + 3 * (1 - t) * t * t * p[2][i] + t ** 3 * p[3][i]
  );
const knurlFront = [[52, 1278], [112, 1262], [172, 1390], [163, 1502]];
const knurlBack = [[142, 1190], [195, 1185], [248, 1300], [240, 1425]];

const Antenna = () => (
  <g transform="translate(1260 360) scale(0.61224 0.38265)" stroke="#0b0b0a" strokeWidth="1.5" fill="none">
    <path d="M845 578L1320 137L1345 105L1400 60C1425 40 1470 45 1490 90C1508 140 1508 210 1478 262L1385 338L915 770L660 1040L400 1275L245 1420L165 1180L310 1040L435 930L570 800Z" fill="url(#tube)" stroke="none" />
    <path d="M1400 60C1425 40 1470 45 1490 90C1508 140 1508 210 1478 262C1490 200 1470 60 1400 60Z" fill="#454541" stroke="none" />
    <g strokeWidth="3">
      <path d="M845 577C885 570 925 640 923 720C923 745 920 760 915 770" />
      <path d="M570 797C630 780 675 890 675 975C675 1000 668 1025 658 1040" />
      <path d="M1400 60C1450 50 1486 140 1485 200C1485 220 1482 235 1478 248" />
      <path d="M1318 137C1365 115 1405 220 1405 280C1405 300 1398 320 1388 337" strokeWidth="7" />
      <path d="M1343 107C1390 95 1433 190 1433 250C1433 270 1428 290 1420 304" strokeWidth="7" />
    </g>
    <path d="M310 1040L435 930C460 905 505 890 512 935V960Q510 985 505 990L437 1050L415 1080C400 1100 410 1130 408 1160C395 1090 360 1035 310 1040Z" fill="#262623" />
    <path d="M435 930L508 990L437 1053Z" fill="#2f2f2c" />
    <path d="M435 930C460 905 505 890 512 935Q512 975 508 990Z" fill="#474742" />
    <path d="M345 1040L390 1007C410 1005 428 1020 430 1058L412 1076L376 1042L400 1020" fill="#34332f" />
    <path d="M435 930V1053" strokeWidth="3" />
    <path d="M315 1037C370 1040 410 1130 412 1190C415 1230 410 1260 398 1277M415 1080C395 1120 420 1170 420 1210C420 1240 412 1255 404 1268" strokeWidth="2.500" />
    <ellipse cx="472" cy="1161" rx="12" ry="27" strokeWidth="3" />
    <path d="M165 1180C220 1180 260 1290 258 1370C258 1390 252 1405 245 1420L155 1508C90 1460 40 1380 50 1275L150 1187Z" fill="#45443f" strokeWidth="2" />
    <path d="M172 1182C222 1190 257 1300 254 1370L242 1415C250 1320 210 1200 150 1187Z" fill="#343430" />
    {Array.from({ length: 21 }, (_, i) => {
      const t = i / 20;
      const a = cubic(knurlFront, t);
      const b = cubic(knurlBack, t);
      return <path key={i} d={`M${a.map(Math.round)}L${b.map(Math.round)}`} stroke="#10100f" strokeWidth="7" strokeLinecap="round" />;
    })}
    <path d="M30 1335C35 1290 60 1270 85 1272C135 1285 166 1390 163 1450C163 1480 158 1500 150 1505L60 1450Z" fill="#2a2a27" strokeWidth="2" />
    <path d="M36 1345C44 1304 62 1296 84 1298C130 1316 152 1400 146 1500L90 1450Z" fill="#4a3f28" strokeWidth="2" />
    <path d="M42 1350C50 1318 66 1308 84 1318C120 1340 138 1410 134 1490L90 1440Z" fill="#b08a48" />
    <path d="M45 1342C75 1338 116 1390 114 1480M50 1333C85 1333 124 1390 122 1480M58 1325C92 1326 132 1390 130 1480M42 1354C66 1348 106 1390 106 1460" strokeWidth="4" stroke="#2b1f08" />
  </g>
);

const Enclosure = () => (
  <g
    transform="translate(680 820) scale(0.45918 0.33333)"
    stroke="#1d1d1b"
    strokeWidth="2.8"
    strokeLinejoin="round"
    fill="none"
  >
    <path d="M1040 70Q1085 45 1133 70L1188 117H1256L1385 222V272L1455 325Q1470 340 1470 355V575L1448 612L692 1215L680 1200L583 1283V1300L478 1383Q427 1410 376 1380L65 1135Q42 1115 42 1090V890Q45 860 68 842L172 762L185 765L277 697L275 678Z" fill="#b2aea3" />
    <path d="M690 1012L1450 405V610L692 1215L680 1200L583 1283V1300L478 1383V1180L583 1105Z" fill="#97948b" stroke="none" />
    <path d="M65 930L376 1180V1380L65 1135Z" fill="#a19e95" />
    <path d="M376 1180Q427 1215 478 1180V1383Q427 1410 376 1380Z" fill="url(#corner)" />
    <path d="M42 890Q45 915 65 930V1135Q42 1115 42 1090Z" fill="#a9a69c" />
    <path d="M1450 405Q1466 390 1470 360V575L1448 612Z" fill="#85827a" />
    <path d="M690 990L1440 390Q1475 355 1440 315M690 1012L1450 406Q1468 388 1469 360" strokeWidth="2" />
    <path d="M1385 272H1392V228" strokeWidth="2" />
    <path d="M68 842C45 875 52 900 70 912L140 966M65 930L133 985M312 1108L380 1160Q427 1190 478 1160L575 1082M312 1126L376 1180Q427 1215 478 1180L583 1100M376 1180L382 1160M478 1180L474 1160M65 930L70 912" strokeWidth="2" />
    <path d="M478 1182V1383M692 1215L1448 612" />
    <path d="M680 1200H692V1215ZM583 1283V1300" />

    <path d="M275 678L350 732C372 755 368 785 345 800L345 770C352 760 345 750 340 745L277 697Z" fill="#8e8b83" strokeWidth="2" />
    <path d="M342 728V748M172 762L245 815" strokeWidth="2" />
    <ellipse cx="290" cy="787" rx="58" ry="41" fill="url(#holeDark)" />

    <path d="M495 1010C480 960 520 927 570 928Q600 930 620 945L690 992V1025L583 1108L575 1080L545 1058Z" fill="#b2aea3" strokeWidth="2" />
    <path d="M495 1010C480 960 520 927 570 928Q600 930 620 945L690 992L688 1018L618 970C580 945 505 950 495 1010Z" fill="#8e8b83" strokeWidth="2" />
    <path d="M620 945V970" strokeWidth="2" />
    <ellipse cx="567" cy="1012" rx="58" ry="46" fill="url(#holeLight)" />

    <path d="M1185 203L1222 172L1315 245L1280 277Z" fill="#b08d4d" />
    <path d="M1185 203L1222 172L1230 182L1194 212Z" fill="#8d8a82" strokeWidth="2" />
    <path d="M1276 267L1308 242" strokeWidth="2" />

    <path d="M135 965L252 878L428 1017L308 1115L308 1263L258 1232L128 1130Z" fill="#8e8b83" strokeWidth="2" />
    <path d="M180 1160L258 1217" stroke="#a19e95" strokeWidth="22" />
    <g stroke="#10102c" strokeWidth="2">
      <path d="M128 990L243 903L265 905L415 1025L308 1120V1265L258 1235V1217L275 1205L187 1138V1150L172 1160L128 1130Z" fill="#35345f" />
      <path d="M137 1005L225 1015V1052L137 1118Z" fill="#26254a" />
      <path d="M137 1118L225 1052L305 1075L297 1245L187 1138L172 1148Z" fill="#3a396c" />
      <path d="M128 990L243 903L267 922V940L172 1012V1048L150 1035L148 1012Z" fill="#3c3b70" />
      <path d="M172 1022L240 985L325 1055L262 1098V1110L285 1130L415 1030L265 905L267 940L172 1012Z" fill="#3f3e75" />
      <path d="M172 1022V1048L240 1000L320 1060L325 1053L240 985Z" fill="#2a2950" />
      <path d="M255 978L272 965L333 1005V1028L320 1040L255 995Z" fill="#4a4981" />
      <path d="M258 1103L380 1010L412 1030L308 1120V1263L258 1235V1217L297 1245V1130L270 1125Z" fill="#3a3970" />
      <path d="M128 990L165 1020M297 1130H285V1140L258 1120V1103" />
      <path d="M282 922l14 10M316 950l14 10M350 979l14 10M386 1006l14 10" strokeWidth="7" />
    </g>
    <path d="M222 1025L248 1006L262 1012L232 1040L222 1042ZM257 1050L285 1032L300 1038L267 1070L257 1068Z" fill="#c09a4e" strokeWidth="2" />
  </g>
);

const Scene = () => (
  <SceneLayer viewBox="0 234 2880 1166" preserveAspectRatio="xMidYMid slice" role="img" aria-label="Enclosure with antenna">
    <defs>
      <linearGradient id="tube" gradientUnits="userSpaceOnUse" x1="662" y1="714" x2="823" y2="888">
        <stop offset="0" stopColor="#6a6965" />
        <stop offset="0.1" stopColor="#42413c" />
        <stop offset="0.3" stopColor="#373631" />
        <stop offset="0.45" stopColor="#363530" />
        <stop offset="0.6" stopColor="#3a3c37" />
        <stop offset="0.72" stopColor="#2d2c28" />
        <stop offset="0.92" stopColor="#2b2a26" />
        <stop offset="1" stopColor="#3f3e3a" />
      </linearGradient>
      <linearGradient id="corner">
        <stop stopColor="#aaa79d" />
        <stop offset="0.5" stopColor="#9d9a91" />
        <stop offset="1" stopColor="#918e86" />
      </linearGradient>
      <linearGradient id="holeDark">
        <stop stopColor="#6d6b65" />
        <stop offset="1" stopColor="#454440" />
      </linearGradient>
      <linearGradient id="holeLight">
        <stop stopColor="#8b8982" />
        <stop offset="1" stopColor="#6f6d68" />
      </linearGradient>
      <filter id="soft" x="-20%" y="-20%" width="140%" height="140%">
        <feGaussianBlur stdDeviation="7" />
      </filter>
      <filter id="edgeSoft">
        <feGaussianBlur stdDeviation="3" />
      </filter>
    </defs>
    <path d={gridPath(true)} stroke="#ededed" />
    <path d={gridPath(false)} stroke="#d2d2d2" />
    <path d={`M0 ${AXIS.y + AXIS.x * 0.5769}L2880 ${AXIS.y - (2880 - AXIS.x) * 0.5769}`} stroke="#8df58d" />
    <g transform="translate(1260 360) scale(0.61224 0.38265)">
      <path d="M1440 285L1480 240Q1510 240 1498 285L1400 390L925 845L680 1095L250 1500L160 1560L150 1505L400 1265L900 760Z" fill="#c8c8c8" filter="url(#edgeSoft)" />
    </g>
    <g transform="translate(680 820) scale(0.45918 0.33333)">
      <path d="M60 1135L400 1420L500 1395L1470 640L1495 590L1400 500L427 1300Z" fill="#bdbdbd" filter="url(#soft)" />
    </g>
    <path d={`M0 ${AXIS.y - AXIS.x * 0.5769}L2880 ${AXIS.y + (2880 - AXIS.x) * 0.5769}`} stroke="#f99a9a" />
    <g>
      <ellipse cx={AXIS.x} cy={AXIS.y} rx="19" ry="11" fill="#b0b0aa" />
      <path d={`M${AXIS.x} ${AXIS.y}L${AXIS.x - 12} ${AXIS.y - 7}Q${AXIS.x} ${AXIS.y - 13} ${AXIS.x + 12} ${AXIS.y - 7}ZM${AXIS.x} ${AXIS.y}L${AXIS.x - 12} ${AXIS.y + 7}Q${AXIS.x} ${AXIS.y + 13} ${AXIS.x + 12} ${AXIS.y + 7}Z`} fill="#e4e4e0" />
    </g>
    <Antenna />
    <Enclosure />
  </SceneLayer>
);

/* ---------- data ---------- */

const ribbonTabs = ['SOLID', 'SURFACE', 'MESH', 'SHEET METAL', 'PLASTIC', 'UTILITIES', 'MANAGE'];

const ribbonGroups = [
  { name: 'CREATE', tools: [IconSketch, IconExtrude, IconRevolve, IconHole, IconPattern, IconForm] },
  { name: 'AUTOMATE', min: 198, tools: [IconAutomate] },
  { name: 'MODIFY', tools: [IconPressPull, IconFillet, IconShell, IconCombine, IconSplit, IconMove] },
  { name: 'ASSEMBLE', tools: [IconNewComponent, IconJoint] },
  { name: 'CONFIGURE', min: 206, tools: [IconConfigure, IconConfigTable] },
  { name: 'CONSTRUCT', min: 208, tools: [IconConstruct] },
  { name: 'INSPECT', min: 158, tools: [IconMeasure] },
];

const insertItems = [
  ['derive', 'Insert Derive'],
  ['decal', 'Decal'],
  ['canvas', 'Canvas'],
  null,
  ['svg', 'Insert SVG'],
  ['dxf', 'Insert DXF'],
  ['mcmaster', 'Insert McMaster-Carr Component'],
  ['mesh', 'Insert Mesh'],
];
const markedItems = [
  ['four', '4 Line Description'],
  ['one', '1 Line Description'],
  ['reset', 'Reset Description'],
];
const supplierItems = [
  ['part', 'Insert a manufacturer part'],
  ['trace', 'Insert TraceParts Supplier Components'],
];

const treeItems = [
  { icon: 'gear', label: 'Document Settings' },
  { icon: 'folder', label: 'Named Views' },
  { icon: 'folder', label: 'Origin', eye: 'off' },
  { icon: 'folder', label: 'Analysis', eye: 'on' },
  { icon: 'folder', label: 'Joints', eye: 'off' },
  { icon: 'folder', label: 'Canvases', eye: 'on' },
  { icon: 'folder', label: 'Sketches', eye: 'on' },
  { icon: 'pinned', label: 'ASR6501:1', eye: 'on' },
  { icon: 'body', label: 'Screws:1', eye: 'on' },
  { icon: 'body', label: 'Antenna Mount:1', eye: 'on' },
  { icon: 'assembly', label: 'Grove Connector:1', eye: 'on' },
  { icon: 'assembly', label: 'Antenna:1', eye: 'on' },
];

const navItems = [
  ['orbit', 'Orbit', 8],
  ['look', 'Look at'],
  ['pan', 'Pan'],
  ['zoom', 'Zoom'],
  ['zoomWindow', 'Zoom window', 8],
  ['display', 'Display settings', 4],
  ['grid', 'Grid and snaps', 4],
  ['layout', 'Viewports', 4],
];

const playback = [
  ['Go to start', 'M4 0h3v28H4zM28 0V28L8 14z'],
  ['Step back', 'M20 0V28L2 14zM22 8h4v12h-4z'],
  ['Play', 'M4 -2L27 14L4 30z'],
  ['Step forward', 'M12 0V28L30 14zM6 8h4v12H6z'],
  ['Go to end', 'M4 0V28L24 14zM25 0h3v28h-3z'],
];

const MenuEntries = ({ items }) =>
  items.map((item, i) =>
    item ? (
      <MenuItem key={item[0]} role="menuitem">
        {menuIcons[item[0]]}
        {item[1]}
      </MenuItem>
    ) : (
      <MenuRule key={i} />
    )
  );

/* ---------- app ---------- */

const Header = () => (
  <TopBar>
    <QuickActions>
      <QuickButton aria-label="Show data panel" $gap={36}>
        <Svg size={32} box="0 0 32 32">
          <path d="M4 2h6v8H2V4zM12 2h8v8h-8zM22 2h6l2 2v6h-8zM2 12h8v8H2zM12 12h8v8h-8zM22 12h8v8h-8zM2 22h8v8H4l-2-2zM12 22h8v8h-8zM22 22h8v6l-2 2h-6z" fill="#666" />
        </Svg>
      </QuickButton>
      <QuickButton aria-label="File" $gap={37}>
        <Svg size={26} h={32} box="0 0 26 32">
          <path d="M2 0H17V10H26V30L24 32H2L0 30V2ZM19 0L26 8H19Z" fill="#666" />
        </Svg>
        <Caret fill="#666" />
      </QuickButton>
      <QuickButton aria-label="Save" disabled $gap={39}>
        <Svg size={28} box="0 0 28 28">
          <path d="M2 0H6V11H22V0H26L28 2V26L26 28H20V18H8V28H5L0 22V2ZM8 0H20V9H8ZM10 20H18V28H10Z" fill="#666" fillRule="evenodd" />
          <path d="M15 1h3v6h-3z" fill={color.chrome} />
        </Svg>
      </QuickButton>
      <QuickButton aria-label="Undo" $gap={22}>
        <Svg size={28} box="0 0 28 28">
          <path d="M11 3L3 11L11 19M4 11H14C22 11 25 17 25 26" stroke="#666" strokeWidth="4" />
        </Svg>
        <Caret fill="#666" />
      </QuickButton>
      <QuickButton aria-label="Redo" disabled>
        <Svg size={28} box="0 0 28 28">
          <path d="M17 3L25 11L17 19M24 11H14C6 11 3 17 3 26" stroke="#666" strokeWidth="4" />
        </Svg>
        <Caret fill="#666" />
      </QuickButton>
    </QuickActions>
    <HomeTab aria-label="Home">
      <Svg size={30} box="0 0 30 30">
        <path d="M15 1L21 8V3H25V12L30 17V19H27V29H19V20H11V29H3V19H0V17ZM13 22H17V29H13Z" fill="#808080" />
      </Svg>
    </HomeTab>
    <DocumentTab>
      <DocumentTitle>
        <Svg size={30} h={32} box="0 0 30 32">
          <path d="M15 0L29 8L15 16L1 8Z" fill="#ffc49b" />
          <path d="M1 8L15 16V32L1 24Z" fill="#ff8f42" />
          <path d="M29 8L15 16V32L29 24Z" fill="#ff6a00" />
        </Svg>
        LoRAN v13
      </DocumentTitle>
      <button aria-label="Close document">
        <Svg size={20} box="0 0 20 20">
          <path d="M2 2L18 18M18 2L2 18" stroke="#808080" strokeWidth="2.500" />
        </Svg>
      </button>
    </DocumentTab>
    <NewTab aria-label="New design">
      <Svg size={26} box="0 0 26 26">
        <path d="M10 0h6v10h10v6H16v10h-6V16H0v-6h10z" fill="#808080" />
      </Svg>
    </NewTab>
    <AccountActions>
      <button aria-label="Extensions">
        <Svg size={32} box="0 0 32 32">
          <circle cx="16" cy="16" r="16" fill="#666" />
          <path d="M4 14C7 8 12 7 16 8L22 5L24 8L17 14L20 17L26 10L28 13L24 20C24 27 16 29 11 24L4 29L0 24L6 20C6 17 5 16 4 14Z" fill={color.chrome} />
        </Svg>
      </button>
      <button aria-label="Job status">
        <Svg size={32} box="0 0 32 32">
          <circle cx="16" cy="16" r="14.500" stroke="#666" strokeWidth="2.500" />
          <circle cx="16" cy="16" r="11.500" fill="#666" />
          <path d="M16 8V17H24" stroke={color.chrome} strokeWidth="2.500" />
        </Svg>
      </button>
      <button aria-label="Notifications">
        <Svg size={32} box="0 0 32 32">
          <path d="M12 2C12 -1 16 -1 16 2C22 4 22 8 22 14C22 20 26 22 27 26H1C2 22 6 20 6 14C6 8 7 4 12 2ZM10 28H18Q14 35 10 28Z" fill="#666" />
          <circle cx="22" cy="8" r="6.500" fill={color.accent} stroke={color.chrome} />
        </Svg>
      </button>
      <button aria-label="Help">
        <Svg size={32} box="0 0 32 32">
          <circle cx="16" cy="16" r="16" fill="#666" />
          <path d="M10 12C10 4 23 4 22 12C22 16 16 16 16 22" stroke={color.chrome} strokeWidth="3.500" />
          <path d="M14 24h4v4h-4z" fill={color.chrome} />
        </Svg>
      </button>
      <button aria-label="Account">
        <Svg size={50} box="0 0 50 50">
          <circle cx="25" cy="25" r="25" fill="#eee" />
          <ellipse cx="26" cy="25" rx="12" ry="9" fill="#fff" stroke="#000" strokeWidth="8" />
          <path d="M24 20L20 30" stroke="#333" strokeWidth="2" />
        </Svg>
      </button>
    </AccountActions>
  </TopBar>
);

const RibbonBar = () => (
  <Ribbon>
    <WorkspaceButton>
      DESIGN <Caret w={12} />
    </WorkspaceButton>
    <RibbonBody>
      <TabList role="tablist">
        {ribbonTabs.map((t, i) => (
          <RibbonTab key={t} role="tab" aria-selected={i === 0}>
            {t}
          </RibbonTab>
        ))}
      </TabList>
      <Groups>
        {ribbonGroups.map((g) => (
          <Group key={g.name} $min={g.min}>
            <GroupTools>
              {g.tools.map((Tool, i) => (
                <button key={i} aria-label={`${g.name} ${i + 1}`}>
                  <Tool />
                </button>
              ))}
            </GroupTools>
            <GroupLabel>
              {g.name} <Caret w={12} />
            </GroupLabel>
          </Group>
        ))}
        <Group>
          <GroupTools>
            <button aria-label="Insert canvas"><IconCanvas /></button>
            <button aria-label="Reset Description"><IconBarrel variant="grey" /></button>
            <button aria-label="1 Line Description"><IconBarrel variant="amber" /></button>
            <button aria-label="4 Line Description"><IconBarrel variant="gold" /></button>
          </GroupTools>
          <GroupLabel aria-expanded>
            INSERT <Caret fill="#fff" w={12} />
          </GroupLabel>
          <Menu role="menu">
            <MenuEntries items={insertItems} />
            <MarkedItems>
              <MenuEntries items={markedItems} />
            </MarkedItems>
            <MenuEntries items={supplierItems} />
          </Menu>
        </Group>
        <Group $min={150}>
          <GroupTools>
            <SelectTile aria-label="Select"><IconSelect /></SelectTile>
          </GroupTools>
          <GroupLabel>
            SELECT <Caret w={12} />
          </GroupLabel>
        </Group>
      </Groups>
    </RibbonBody>
  </Ribbon>
);

const BrowserPanel = () => (
  <Panel>
    <PanelHeader>
      <button aria-label="Collapse browser">
        <Svg size={20} h={12} box="0 0 20 12">
          <path d="M10 0V12L0 6ZM20 0V12L10 6Z" fill="#333" />
        </Svg>
      </button>
      <PanelTitle>BROWSER</PanelTitle>
      <button aria-label="Minimise browser"><Toggle /></button>
    </PanelHeader>
    <Tree>
      <TreeLine $root>
        <Expander aria-label="Collapse LoRAN v13">
          <Svg size={16} box="0 0 16 16">
            <path d="M15 1V15H1Z" fill="#777" stroke="#111" strokeWidth="2" />
          </Svg>
        </Expander>
        <TreeRow>
          <Eye />
          <ActiveComponent>
            {treeIcons.assembly}
            <TreeLabel>LoRAN v13</TreeLabel>
          </ActiveComponent>
          <ActivateRadio type="radio" name="active" defaultChecked aria-label="Activate LoRAN v13" />
        </TreeRow>
      </TreeLine>
      {treeItems.map((item) => (
        <TreeLine key={item.label}>
          <Expander aria-label={`Expand ${item.label}`}>
            <Svg size={14} h={18} box="0 0 14 18">
              <path d="M2 1H4L13 9L4 17H2Z" fill="#fff" stroke="#111" strokeWidth="1.500" />
            </Svg>
          </Expander>
          <TreeRow>
            {item.eye && <Eye off={item.eye === 'off'} />}
            {treeIcons[item.icon]}
            <TreeLabel>{item.label}</TreeLabel>
          </TreeRow>
        </TreeLine>
      ))}
    </Tree>
  </Panel>
);

export default function App() {
  return (
    <>
      <GlobalStyle />
      <Page>
        <Header />
        <RibbonBar />
        <Viewport>
          <Scene />
          <BrowserPanel />
          <ViewportFooter>
            <Panel>
              <PanelHeader>
                <PanelTitle $alone>COMMENTS</PanelTitle>
                <button aria-label="Expand comments"><Toggle plus /></button>
              </PanelHeader>
            </Panel>
            <NavBar>
              {navItems.map(([id, label, gap]) => (
                <NavButton key={id} aria-label={label} $gap={gap}>
                  {navIcons[id]}
                  {gap && <Caret w={12} />}
                </NavButton>
              ))}
            </NavBar>
            <AssistantButton aria-label="Autodesk Assistant">
              <Svg size={28} box="0 0 28 28">
                <path d="M14 0A14 14 0 0 1 28 14V28H14A14 14 0 0 1 14 0Z" fill="#000" />
                <path d="M5 18L17 8H23V20H16L19 13L9 20H5Z" fill="#fff" />
              </Svg>
            </AssistantButton>
          </ViewportFooter>
        </Viewport>
        <Timeline>
          <Playback>
            <ScrollThumb />
            <PlaybackButtons>
              {playback.map(([label, d]) => (
                <PlaybackButton key={label} aria-label={label}>
                  <Svg size={32} box="0 -2 32 32">
                    <path d={d} fill="#4a4a4c" />
                  </Svg>
                </PlaybackButton>
              ))}
            </PlaybackButtons>
          </Playback>
          <Track>
            {[...timelineSteps].map((s, i) => {
              const key = s.toLowerCase();
              const Icon = timelineIcons[key];
              return (
                <Step key={i} $suppressed={s === 'E'}>
                  <button aria-label={`${timelineNames[key]} ${i + 1}`}>
                    <Icon size={32} />
                  </button>
                </Step>
              );
            })}
          </Track>
          <TimelineSettings aria-label="Timeline settings">
            <Gear />
          </TimelineSettings>
        </Timeline>
      </Page>
    </>
  );
}
